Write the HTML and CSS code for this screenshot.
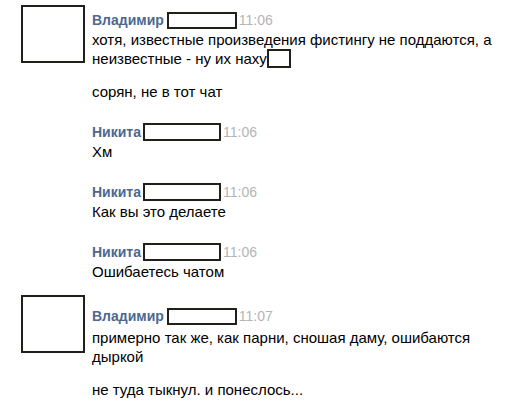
FILE: index.html
```html
<!DOCTYPE html>
<html lang="ru">
<head>
<meta charset="utf-8">
<link rel="stylesheet" href="styles.css">
</head>
<body>
<div class="chat">
  <div class="group group-first">
    <div class="avatar"></div>
    <div class="content">
      <div class="msg">
        <div class="head"><span class="name">Владимир</span><span class="redact"></span><span class="time">11:06</span></div>
        <div class="text">хотя, известные произведения фистингу не поддаются, а неизвестные - ну их наху<span class="redact-small"></span></div>
      </div>
      <div class="text para">сорян, не в тот чат</div>
      <div class="msg msg-sep">
        <div class="head"><span class="name">Никита</span><span class="redact redact-wide"></span><span class="time">11:06</span></div>
        <div class="text">Хм</div>
      </div>
      <div class="msg msg-sep">
        <div class="head"><span class="name">Никита</span><span class="redact redact-wide"></span><span class="time">11:06</span></div>
        <div class="text">Как вы это делаете</div>
      </div>
      <div class="msg msg-sep">
        <div class="head"><span class="name">Никита</span><span class="redact redact-wide"></span><span class="time">11:06</span></div>
        <div class="text">Ошибаетесь чатом</div>
      </div>
    </div>
  </div>
  <div class="group group-second">
    <div class="avatar"></div>
    <div class="content">
      <div class="msg">
        <div class="head"><span class="name">Владимир</span><span class="redact"></span><span class="time">11:07</span></div>
        <div class="text text-lower">примерно так же, как парни, сношая даму, ошибаются дыркой</div>
      </div>
      <div class="text para">не туда тыкнул. и понеслось...</div>
    </div>
  </div>
</div>
</body>
</html>
```

FILE: styles.css
```css
html, body {
  margin: 0;
  padding: 0;
  background: #ffffff;
}
body {
  font-family: "Liberation Sans", Arial, sans-serif;
  color: #000;
  width: 527px;
  height: 414px;
  overflow: hidden;
}
.chat {
  display: flex;
  flex-direction: column;
}
.group {
  display: flex;
  align-items: flex-start;
}
.group-first {
  padding-top: 5px;
}
.group-first .content {
  padding-top: 5px;
}
.group-second {
  margin-top: 14px;
}
.group-second .content {
  padding-top: 11px;
}
.avatar {
  width: 64px;
  height: 58px;
  box-sizing: border-box;
  border: 2px solid #231f1a;
  margin-left: 21px;
  margin-right: 7px;
  flex: none;
}
.content {
  flex: 1;
  min-width: 0;
  padding-right: 20px;
}
.head {
  height: 20px;
  display: flex;
  align-items: center;
}
.name {
  font-weight: bold;
  font-size: 14px;
  color: #4d6890;
}
.redact {
  display: inline-block;
  width: 70px;
  height: 17px;
  box-sizing: border-box;
  border: 2px solid #231f1a;
  margin-left: 3px;
}
.redact-wide {
  width: 78px;
  height: 18px;
  margin-left: 2px;
}
.time {
  font-size: 14px;
  color: #b4b4b4;
  margin-left: 2px;
}
.text {
  font-size: 15px;
  line-height: 19px;
}
.text-lower {
  margin-top: 2px;
}
.redact-small {
  display: inline-block;
  width: 24px;
  height: 19px;
  box-sizing: border-box;
  border: 2px solid #231f1a;
  vertical-align: -4px;
}
.para {
  margin-top: 14px;
}
.msg-sep {
  margin-top: 21px;
}
```
